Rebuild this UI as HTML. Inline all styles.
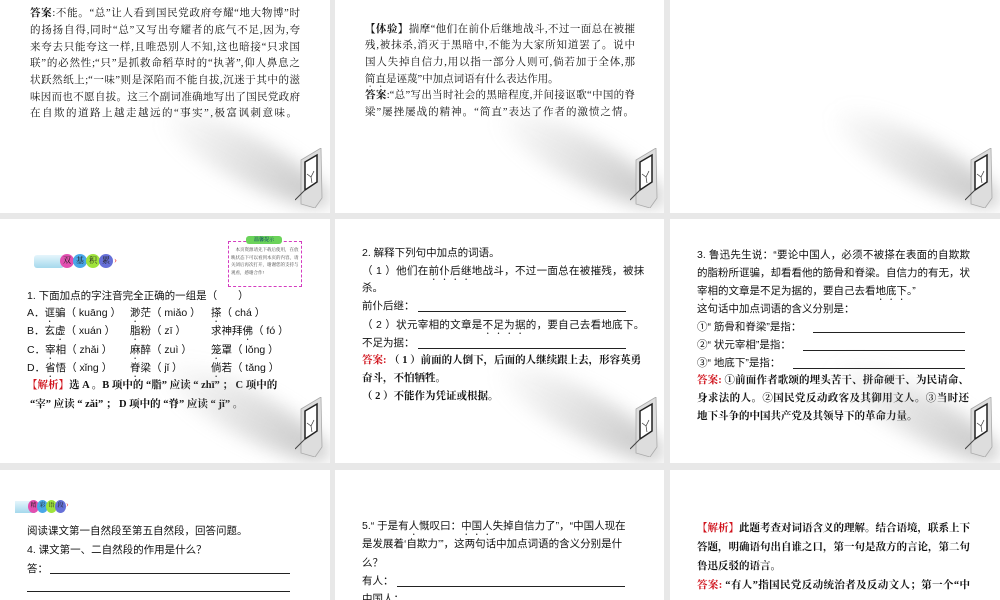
<!DOCTYPE html>
<html><head><meta charset="utf-8"><style>
*{margin:0;padding:0;box-sizing:border-box}
body{width:1000px;height:600px;background:#e8e8e8;position:relative;overflow:hidden;font-family:"Liberation Serif","Noto Serif CJK SC","Noto Sans CJK SC",serif;color:#111}
.p{position:absolute;background:#fff;overflow:hidden}
.l{position:absolute;font-size:10.5px;white-space:nowrap;line-height:14px}
.j{text-align:justify;text-align-last:justify;white-space:normal;height:14px;overflow:hidden}
.b{font-weight:bold}
.r{color:#d0121b;font-weight:bold}
.s{font-family:"Liberation Sans","Noto Sans CJK SC",sans-serif}
.sh{position:absolute;width:190px;height:46px;border-radius:50%;background:linear-gradient(90deg,rgba(255,255,255,0),rgba(150,150,150,.55));filter:blur(9px);transform:rotate(28deg)}
.door{position:absolute;width:28px;height:60px}
.u{position:absolute;border-bottom:1px solid #222;height:1px}
.dot{text-emphasis:dot;-webkit-text-emphasis:"•";text-emphasis-position:under;-webkit-text-emphasis-position:under}
.c{position:absolute;border-radius:50%;color:#222;text-align:center}
</style></head><body>
<svg width="0" height="0" style="position:absolute"><defs>
<symbol id="dr" viewBox="0 0 28 60"><polygon points="6,12 26,0 27,50 20,60 6,56" fill="#ddd" stroke="#aaa" stroke-width=".8"/><polygon points="10,14 22,7 22,34 10,42" fill="#fff" stroke="#222" stroke-width="1.5"/><path d="M12,26 l4,3 l3,-6 M16,29 l1,6" stroke="#333" stroke-width=".7" fill="none"/><path d="M0,52 L10,42" stroke="#444" stroke-width="1"/></symbol>
</defs></svg>

<!-- Panel 1 -->
<div class="p" style="left:0;top:0;width:330px;height:213px">
<div class="l j" style="left:30px;top:7px;width:270px"><span class="b">答案</span>:不能。“总”让人看到国民党政府夸耀“地大物博”时</div>
<div class="l j" style="left:30px;top:24px;width:270px">的扬扬自得,同时“总”又写出夸耀者的底气不足,因为,夸</div>
<div class="l j" style="left:30px;top:41px;width:270px">来夸去只能夸这一样,且唯恐别人不知,这也暗接“只求国</div>
<div class="l j" style="left:30px;top:57px;width:270px">联”的必然性;“只”是抓救命稻草时的“执著”,仰人鼻息之</div>
<div class="l j" style="left:30px;top:74px;width:270px">状跃然纸上;“一味”则是深陷而不能自拔,沉迷于其中的滋</div>
<div class="l j" style="left:30px;top:91px;width:270px">味因而也不愿自拔。这三个副词准确地写出了国民党政府</div>
<div class="l" style="left:30px;top:107px;letter-spacing:1.5px">在自欺的道路上越走越远的“事实”,极富讽刺意味。</div>
<div class="sh" style="left:150px;top:135px"></div>
<svg class="door" style="left:295px;top:148px"><use href="#dr"/></svg>
</div>

<!-- Panel 2 -->
<div class="p" style="left:335px;top:0;width:329px;height:213px">
<div class="l j" style="left:30px;top:23px;width:270px"><span class="b">【体验】</span>揣摩“他们在前仆后继地战斗,不过一面总在被摧</div>
<div class="l j" style="left:30px;top:39px;width:270px">残,被抹杀,消灭于黑暗中,不能为大家所知道罢了。说中</div>
<div class="l j" style="left:30px;top:56px;width:270px">国人失掉自信力,用以指一部分人则可,倘若加于全体,那</div>
<div class="l" style="left:30px;top:73px"><span class="dot">简直</span>是诬蔑”中加点词语有什么表达作用。</div>
<div class="l j" style="left:30px;top:89px;width:270px"><span class="b">答案</span>:“总”写出当时社会的黑暗程度,并间接讴歌“中国的脊</div>
<div class="l" style="left:30px;top:106px;letter-spacing:1px">梁”屡挫屡战的精神。“简直”表达了作者的激愤之情。</div>
<div class="sh" style="left:150px;top:135px"></div>
<svg class="door" style="left:295px;top:148px"><use href="#dr"/></svg>
</div>

<!-- Panel 3 -->
<div class="p" style="left:670px;top:0;width:330px;height:213px">
<div class="sh" style="left:150px;top:135px"></div>
<svg class="door" style="left:295px;top:148px"><use href="#dr"/></svg>
</div>

<!-- Panel 4 -->
<div class="p" style="left:0;top:219px;width:330px;height:244px">
<div style="position:absolute;left:34px;top:36px;width:30px;height:13px;background:linear-gradient(#dff3fb,#8fcfe8);border-radius:3px;opacity:.8"></div>
<div class="c" style="left:60px;top:35px;width:14px;height:14px;background:#e24fb0;font-size:8px;line-height:14px">双</div>
<div class="c" style="left:73px;top:35px;width:14px;height:14px;background:#4aa7e8;font-size:8px;line-height:14px">基</div>
<div class="c" style="left:86px;top:35px;width:14px;height:14px;background:#9fe33c;font-size:8px;line-height:14px">积</div>
<div class="c" style="left:99px;top:35px;width:14px;height:14px;background:#6670d8;font-size:8px;line-height:14px">累</div>
<div style="position:absolute;left:114px;top:36px;font-size:9px;color:#e44">›</div>
<div style="position:absolute;left:228px;top:22px;width:74px;height:46px;border:1px dashed #d43cc0"></div>
<div style="position:absolute;left:246px;top:17px;width:36px;height:8px;background:#6bd35a;border-radius:3px;font-size:5px;text-align:center;color:#036">温馨提示</div>
<div style="position:absolute;left:231px;top:27px;width:70px;font-size:4.5px;line-height:7.5px;color:#444">　本页资源请先下载后使用，在放映状态下可以看到本页的内容，请关闭后再次打开，谢谢您的支持与观看，感谢合作!</div>
<div class="l s" style="left:27px;top:70px">1. 下面加点的字注音完全正确的一组是（　　）</div>
<div class="l s" style="left:27px;top:87px">A．<span class="dot">诓</span>骗（ kuāng ）</div><div class="l s" style="left:130px;top:87px"><span class="dot">渺</span>茫（ miǎo ）</div><div class="l s" style="left:211px;top:87px"><span class="dot">搽</span>（ chá ）</div>
<div class="l s" style="left:27px;top:105px">B．玄<span class="dot">虚</span>（ xuán ）</div><div class="l s" style="left:130px;top:105px"><span class="dot">脂</span>粉（ zī ）</div><div class="l s" style="left:211px;top:105px">求神拜<span class="dot">佛</span>（ fó ）</div>
<div class="l s" style="left:27px;top:124px">C．<span class="dot">宰</span>相（ zhǎi ）</div><div class="l s" style="left:130px;top:124px"><span class="dot">麻</span>醉（ zuì ）</div><div class="l s" style="left:211px;top:124px"><span class="dot">笼</span>罩（ lǒng ）</div>
<div class="l s" style="left:27px;top:142px">D．<span class="dot">省</span>悟（ xǐng ）</div><div class="l s" style="left:130px;top:142px"><span class="dot">脊</span>梁（ jǐ ）</div><div class="l s" style="left:211px;top:142px"><span class="dot">倘</span>若（ tǎng ）</div>
<div class="l b" style="left:27px;top:160px"><span class="r">【解析】</span>选 A 。B 项中的 “脂” 应读 “ zhī” ； C 项中的</div>
<div class="l b" style="left:30px;top:179px">“宰” 应读 “ zǎi” ； D 项中的 “脊” 应读 “ jǐ” 。</div>
<div class="sh" style="left:150px;top:170px"></div>
<svg class="door" style="left:295px;top:178px"><use href="#dr"/></svg>
</div>

<!-- Panel 5 -->
<div class="p" style="left:335px;top:219px;width:329px;height:244px">
<div class="l s" style="left:27px;top:27px">2. 解释下列句中加点的词语。</div>
<div class="l s" style="left:27px;top:45px;letter-spacing:.3px">（ 1 ）他们在<span class="dot">前仆后继</span>地战斗，不过一面总在被摧残，被抹</div>
<div class="l s" style="left:27px;top:62px">杀。</div>
<div class="l s" style="left:27px;top:80px">前仆后继：</div><div class="u" style="left:83px;top:92px;width:208px"></div>
<div class="l s" style="left:27px;top:99px;letter-spacing:.3px">（ 2 ）状元宰相的文章是<span class="dot">不足为据</span>的，要自己去看地底下。</div>
<div class="l s" style="left:27px;top:117px">不足为据：</div><div class="u" style="left:83px;top:129px;width:208px"></div>
<div class="l b" style="left:27px;top:135px"><span class="r">答案:</span> （ 1 ）前面的人倒下，后面的人继续跟上去，形容英勇</div>
<div class="l b" style="left:27px;top:153px">奋斗，不怕牺牲。</div>
<div class="l b" style="left:27px;top:171px">（ 2 ）不能作为凭证或根据。</div>
<div class="sh" style="left:150px;top:170px"></div>
<svg class="door" style="left:295px;top:178px"><use href="#dr"/></svg>
</div>

<!-- Panel 6 -->
<div class="p" style="left:670px;top:219px;width:330px;height:244px">
<div class="l s j" style="left:27px;top:29px;width:273px">3. 鲁迅先生说：“要论中国人，必须不被搽在表面的自欺欺人</div>
<div class="l s j" style="left:27px;top:47px;width:273px">的脂粉所诓骗，却看看他的<span class="dot">筋骨和脊梁</span>。自信力的有无，<span class="dot">状元</span></div>
<div class="l s" style="left:27px;top:65px"><span class="dot">宰相</span>的文章是不足为据的，要自己去看<span class="dot">地底下</span>。”</div>
<div class="l s" style="left:27px;top:83px">这句话中加点词语的含义分别是：</div>
<div class="l s" style="left:27px;top:101px">①“ 筋骨和脊梁”是指：</div><div class="u" style="left:143px;top:113px;width:152px"></div>
<div class="l s" style="left:27px;top:119px">②“ 状元宰相”是指：</div><div class="u" style="left:133px;top:131px;width:162px"></div>
<div class="l s" style="left:27px;top:137px">③“ 地底下”是指：</div><div class="u" style="left:123px;top:149px;width:172px"></div>
<div class="l b j" style="left:27px;top:155px;width:272px"><span class="r">答案:</span> ①前面作者歌颂的埋头苦干、拼命硬干、为民请命、舍</div>
<div class="l b j" style="left:27px;top:173px;width:272px">身求法的人。②国民党反动政客及其御用文人。③当时还处于</div>
<div class="l b" style="left:27px;top:191px">地下斗争的中国共产党及其领导下的革命力量。</div>
<div class="sh" style="left:150px;top:170px"></div>
<svg class="door" style="left:295px;top:178px"><use href="#dr"/></svg>
</div>

<!-- Panel 7 -->
<div class="p" style="left:0;top:470px;width:330px;height:130px">
<div style="position:absolute;left:15px;top:31px;width:20px;height:12px;background:linear-gradient(#dff3fb,#8fcfe8);opacity:.8"></div>
<div class="c" style="left:28px;top:30px;width:11px;height:13px;background:#e24fb0;font-size:6px;line-height:13px">精</div>
<div class="c" style="left:37px;top:30px;width:11px;height:13px;background:#4aa7e8;font-size:6px;line-height:13px">彩</div>
<div class="c" style="left:46px;top:30px;width:11px;height:13px;background:#9fe33c;font-size:6px;line-height:13px">语</div>
<div class="c" style="left:55px;top:30px;width:11px;height:13px;background:#6670d8;font-size:6px;line-height:13px">段</div>
<div style="position:absolute;left:66px;top:30px;font-size:8px;color:#e44">›</div>
<div class="l s" style="left:27px;top:54px">阅读课文第一自然段至第五自然段，回答问题。</div>
<div class="l s" style="left:27px;top:73px">4. 课文第一、二自然段的作用是什么？</div>
<div class="l s" style="left:27px;top:92px">答：</div><div class="u" style="left:50px;top:103px;width:240px"></div>
<div class="u" style="left:27px;top:121px;width:263px"></div>
</div>

<!-- Panel 8 -->
<div class="p" style="left:335px;top:470px;width:329px;height:130px">
<div class="l s" style="left:27px;top:49px">5.“ 于是有<span class="dot">人</span>慨叹曰：<span class="dot">中国人</span>失掉自信力了”，“中国人现在</div>
<div class="l s" style="left:27px;top:67px">是发展着‘自欺力’”，这两句话中加点词语的含义分别是什</div>
<div class="l s" style="left:27px;top:86px">么？</div>
<div class="l s" style="left:27px;top:104px">有人：</div><div class="u" style="left:62px;top:116px;width:228px"></div>
<div class="l s" style="left:27px;top:122px">中国人：</div>
</div>

<!-- Panel 9 -->
<div class="p" style="left:670px;top:470px;width:330px;height:130px">
<div class="l b j" style="left:27px;top:52px;width:273px"><span class="r">【解析】</span>此题考查对词语含义的理解。结合语境，联系上下文</div>
<div class="l b j" style="left:27px;top:71px;width:273px">答题，明确语句出自谁之口，第一句是敌方的言论，第二句是</div>
<div class="l b" style="left:27px;top:90px">鲁迅反驳的语言。</div>
<div class="l b j" style="left:27px;top:109px;width:273px"><span class="r">答案:</span> “有人”指国民党反动统治者及反动文人；第一个“中</div>
</div>
</body></html>
